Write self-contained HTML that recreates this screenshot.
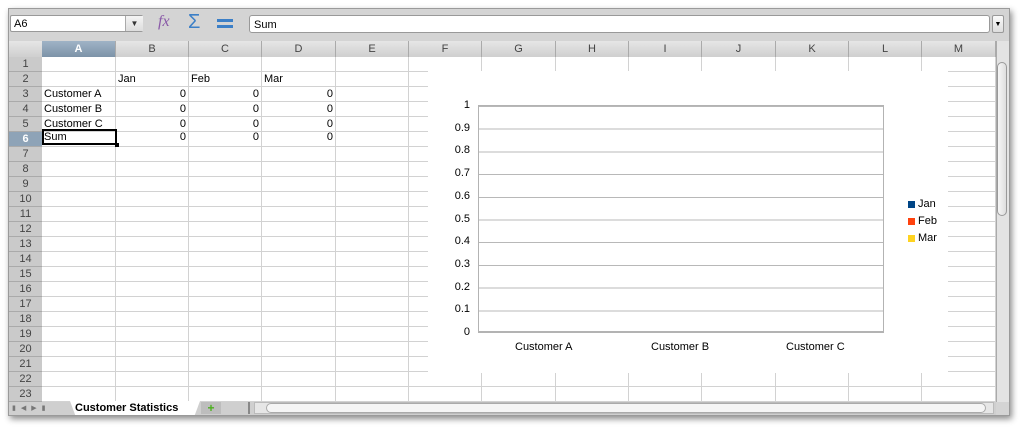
<!DOCTYPE html><html><head><style>
body{margin:0;width:1024px;height:432px;background:#fff;font-family:"Liberation Sans",sans-serif;position:relative;overflow:hidden}
.a{position:absolute}
.win{left:8px;top:8px;width:1002px;height:408px;background:#d4d4d4;box-shadow:2px 3px 6px rgba(0,0,0,.45);border:1px solid #9a9a9a;box-sizing:border-box}
.hdr{background:linear-gradient(#e6e6e6,#cfcfcf);color:#444;font-size:11px;text-align:center;border-right:1px solid #aaa;box-sizing:border-box}
.cell{font-size:11px;color:#000;height:14px;line-height:14px;white-space:nowrap}
.yl{font-size:11px;text-align:right;width:30px;color:#000}
</style></head><body>
<div class="a win"></div>
<div class="a" style="left:10px;top:15px;width:133px;height:17px;background:#fff;border:1px solid #999;border-radius:2px;font-size:11px;line-height:17px;padding-left:3px;box-sizing:border-box">A6</div>
<div class="a" style="left:125px;top:16px;width:17px;height:15px;background:linear-gradient(#f4f4f4,#ddd);border-left:1px solid #aaa;font-size:8px;text-align:center;line-height:15px;color:#333">▼</div>
<div class="a" style="left:158px;top:13px;font-size:16px;font-style:italic;color:#8a5aa8;font-family:'Liberation Serif',serif">fx</div>
<div class="a" style="left:188px;top:11px;font-size:20px;color:#3b7fc7">Σ</div>
<div class="a" style="left:217px;top:19px;width:16px;height:3px;background:#3b7fc7"></div>
<div class="a" style="left:217px;top:25px;width:16px;height:3px;background:#3b7fc7"></div>
<div class="a" style="left:249px;top:15px;width:741px;height:18px;background:#fff;border:1px solid #999;border-radius:3px;font-size:11px;line-height:18px;padding-left:4px;box-sizing:border-box">Sum</div>
<div class="a" style="left:992px;top:15px;width:12px;height:18px;background:linear-gradient(#fafafa,#ddd);border:1px solid #999;border-radius:2px;font-size:7px;text-align:center;line-height:18px;box-sizing:border-box">▼</div>
<div class="a" style="left:9px;top:41px;width:987px;height:16px;background:linear-gradient(#e6e6e6,#cfcfcf);border-bottom:1px solid #999"></div>
<div class="a hdr" style="left:42px;top:41px;width:74px;height:16px;line-height:16px;background:linear-gradient(#9fb3c6,#7d93a8);color:#fff;font-weight:bold">A</div>
<div class="a" style="left:9px;top:57px;width:987px;height:345px;background:repeating-linear-gradient(#fff 0 14px,#d2d2d2 14px 15px);"></div>
<div id="ch"></div>
<div id="rows"></div>
<div class="a" style="left:428px;top:71px;width:520px;height:302px;background:#fff"></div>
<div class="a" style="left:478px;top:105px;width:406px;height:227px;border:1px solid #b3b3b3;box-sizing:border-box;background:repeating-linear-gradient(#b8b8b8 0 1px,transparent 1px 22.7px)"></div>
<div class="a" style="left:478px;top:332px;width:406px;height:1px;background:#b3b3b3"></div>
<div id="yl"></div>
<div class="a cell" style="left:515px;top:340px">Customer A</div>
<div class="a cell" style="left:651px;top:340px">Customer B</div>
<div class="a cell" style="left:786px;top:340px">Customer C</div>
<div class="a" style="left:908px;top:201px;width:7px;height:7px;background:#004586"></div><div class="a cell" style="left:918px;top:197px">Jan</div>
<div class="a" style="left:908px;top:218px;width:7px;height:7px;background:#ff420e"></div><div class="a cell" style="left:918px;top:214px">Feb</div>
<div class="a" style="left:908px;top:235px;width:7px;height:7px;background:#ffd320"></div><div class="a cell" style="left:918px;top:231px">Mar</div>
<div class="a cell" style="left:118px;top:72px">Jan</div><div class="a cell" style="left:191px;top:72px">Feb</div><div class="a cell" style="left:264px;top:72px">Mar</div>
<div class="a cell" style="left:44px;top:87px">Customer A</div><div class="a cell" style="left:44px;top:102px">Customer B</div><div class="a cell" style="left:44px;top:117px">Customer C</div><div class="a cell" style="left:44px;top:130px">Sum</div>
<div id="zeros"></div>
<div class="a" style="left:42px;top:129px;width:75px;height:16px;border:2px solid #000;box-sizing:border-box"></div>
<div class="a" style="left:115px;top:143px;width:4px;height:4px;background:#000"></div>
<div class="a" style="left:996px;top:41px;width:12px;height:361px;background:#e3e3e3;border-left:1px solid #aaa"></div>
<div class="a" style="left:997px;top:62px;width:10px;height:154px;background:linear-gradient(90deg,#f6f6f6,#ddd);border:1px solid #999;border-radius:5px;box-sizing:border-box"></div>
<div class="a" style="left:9px;top:402px;width:987px;height:13px;background:#cfcfcf"></div>
<div class="a" style="left:12px;top:404px;width:54px;height:10px;font-size:7px;color:#777;letter-spacing:5px">▮◀▶▮</div>
<div class="a" style="left:70px;top:401px;width:130px;height:14px;background:#fff;font-size:11px;font-weight:bold;line-height:14px;padding-left:5px;box-sizing:border-box;clip-path:polygon(0 0,100% 0,96% 100%,4% 100%)">Customer Statistics</div>
<div class="a" style="left:201px;top:402px;width:20px;height:12px;background:#bdbdbd;color:#4bb01e;font-size:12px;font-weight:bold;line-height:12px;text-align:center">+</div>
<div class="a" style="left:248px;top:402px;width:2px;height:12px;background:#888"></div>
<div class="a" style="left:254px;top:402px;width:740px;height:12px;background:#e6e6e6;border:1px solid #bbb;box-sizing:border-box"></div>
<div class="a" style="left:266px;top:403px;width:720px;height:10px;background:#f5f5f5;border:1px solid #aaa;border-radius:5px;box-sizing:border-box"></div>
<script>
var cols="ABCDEFGHIJKLM",x=[42,116,189,262,336,409,482,556,629,702,776,849,922,996],h="";
for(var i=1;i<13;i++)h+='<div class="a hdr" style="left:'+x[i]+'px;top:41px;width:'+(x[i+1]-x[i])+'px;height:16px;line-height:16px">'+cols[i]+'</div>';
for(var i=1;i<14;i++)h+='<div class="a" style="left:'+(x[i]-1)+'px;top:57px;width:1px;height:345px;background:#d2d2d2"></div>';
document.getElementById('ch').innerHTML=h;h="";
for(var r=1;r<=23;r++){var t=57+(r-1)*15;h+='<div class="a" style="left:9px;top:'+t+'px;width:33px;height:15px;line-height:15px;text-align:center;font-size:11px;color:#444;border-bottom:1px solid #aaa;box-sizing:border-box;background:'+(r==6?'#8ea3b7':'#cacaca')+';'+(r==6?'color:#fff;font-weight:bold':'')+'">'+r+'</div>';}
document.getElementById('rows').innerHTML=h;h="";
var lb=["1","0.9","0.8","0.7","0.6","0.5","0.4","0.3","0.2","0.1","0"];
for(var i=0;i<11;i++)h+='<div class="a yl" style="left:440px;top:'+(99+i*22.7)+'px">'+lb[i]+'</div>';
document.getElementById('yl').innerHTML=h;h="";
for(var r=0;r<4;r++)for(var c=1;c<4;c++)h+='<div class="a cell" style="left:'+x[c]+'px;width:'+(x[c+1]-x[c]-3)+'px;text-align:right;top:'+(87+r*15-(r==3?2:0))+'px">0</div>';
document.getElementById('zeros').innerHTML=h;
</script>
</body></html>
